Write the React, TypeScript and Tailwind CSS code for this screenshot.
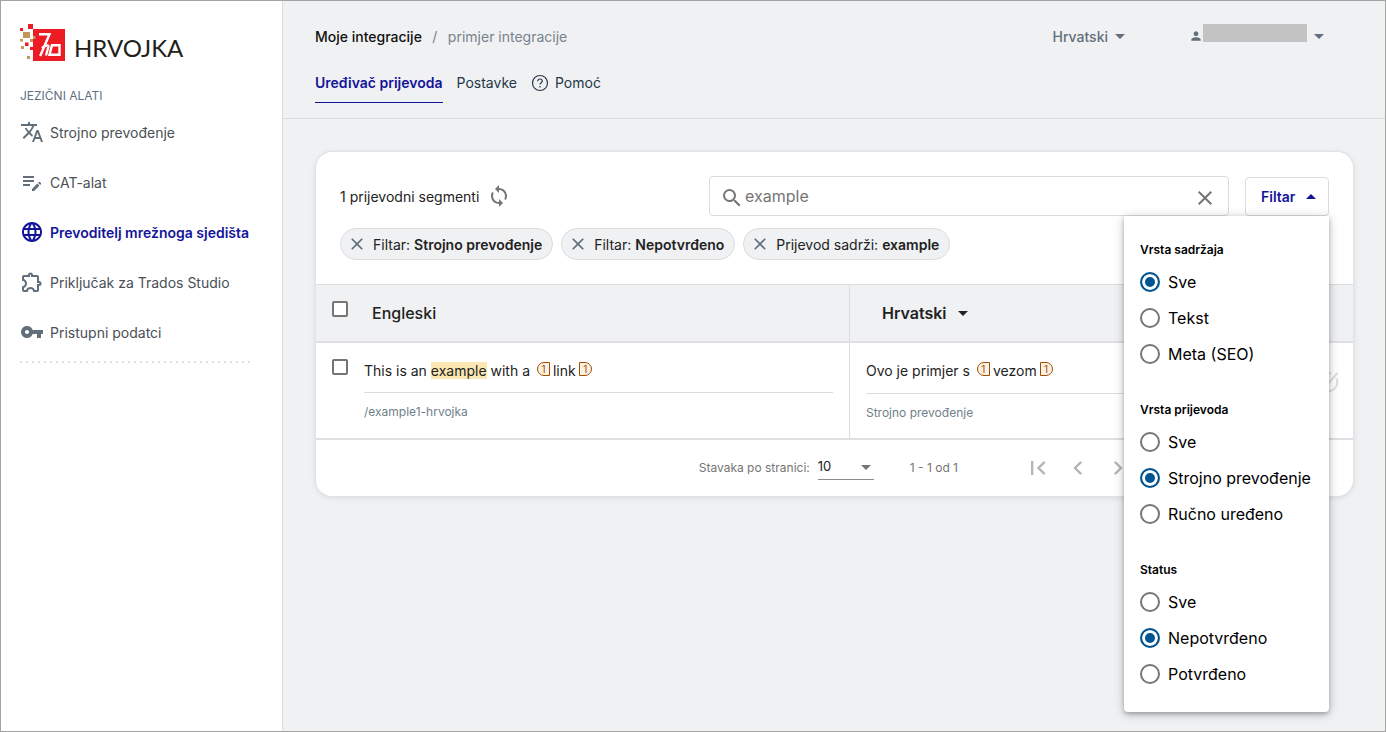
import { useState } from "react";
import type { ReactNode } from "react";
import {
  MdArrowDropDown,
  MdArrowDropUp,
  MdChevronLeft,
  MdChevronRight,
  MdClose,
  MdEditNote,
  MdFirstPage,
  MdLanguage,
  MdLastPage,
  MdOutlineExtension,
  MdPerson,
  MdSearch,
  MdSync,
  MdTranslate,
  MdVpnKey,
} from "react-icons/md";

const navItems = [
  { label: "Strojno prevođenje", icon: MdTranslate },
  { label: "CAT-alat", icon: MdEditNote },
  { label: "Prevoditelj mrežnoga sjedišta", icon: MdLanguage, active: true },
  { label: "Priključak za Trados Studio", icon: MdOutlineExtension },
  { label: "Pristupni podatci", icon: MdVpnKey },
];

const chips = [
  { name: "Filtar:", value: "Strojno prevođenje" },
  { name: "Filtar:", value: "Nepotvrđeno" },
  { name: "Prijevod sadrži:", value: "example" },
];

const filterGroups = [
  { id: "content", title: "Vrsta sadržaja", options: ["Sve", "Tekst", "Meta (SEO)"] },
  { id: "type", title: "Vrsta prijevoda", options: ["Sve", "Strojno prevođenje", "Ručno uređeno"] },
  { id: "status", title: "Status", options: ["Sve", "Nepotvrđeno", "Potvrđeno"] },
];

function Logo() {
  return (
    <a href="#" className="flex items-start gap-2 text-[#231f20]">
      <svg width="46" height="38" viewBox="0 0 46 38" aria-hidden="true">
        <g fill="#ed1c24">
          <path d="M13 5h32v32H13z" />
          <path d="M8 0h5v5H8zM0 4h3v3H0zM5 18.500h3.500v3.500H5zM10 23h3v3h-3z" />
        </g>
        <g fill="#c4965a">
          <path d="M3 8h7v6H3zM10 15h3v3h-3zM0 15h3v2.500H0zM1 22h3v3H1zM7 32h3v3H7zM13 12h2.500v3H13z" />
        </g>
        <g fill="none" stroke="#fff" strokeWidth="2.400">
          <path d="M19 10.200h10.500L20.200 32" />
          <path d="M22 24c3-2.500 7-3.500 6.500-1.500L26 31.500" />
          <path d="M29.500 30.800l2.500-9.500h7.500v9.500z" />
        </g>
      </svg>
      <span className="pt-2 font-['Lato',sans-serif] text-[24px] leading-8">HRVOJKA</span>
    </a>
  );
}

function Sidebar() {
  return (
    <aside className="w-[282px] shrink-0 border-r border-[#dadce0] bg-white pt-[23px] pl-[19px]">
      <Logo />
      <h2 className="mt-5 text-[12px] leading-6 text-[#5f6f7f]">JEZIČNI ALATI</h2>
      <nav className="mt-3 flex flex-col gap-[26px]">
        {navItems.map(({ label, icon: Icon, active }) => (
          <a
            key={label}
            href="#"
            className={
              active
                ? "flex h-6 items-center gap-1.5 text-[14px] font-semibold text-[#14149b]"
                : "flex h-6 items-center gap-1.5 text-[14px] text-[#4a5056]"
            }
          >
            <Icon size={24} className={active ? "text-[#14149b]" : "text-[#636e7b]"} />
            {label}
          </a>
        ))}
      </nav>
      <div className="mt-[17px] mr-8 h-0.5 bg-[repeating-linear-gradient(90deg,#dfdfdf_0_2px,transparent_2px_6px)]" />
    </aside>
  );
}

function HelpIcon() {
  return (
    <svg width="18" height="18" viewBox="0 0 18 18" fill="none" stroke="currentColor" strokeWidth="1.200">
      <circle cx="9" cy="9" r="7.500" />
      <path d="M6.700 7.200C6.700 5.800 7.700 5 9 5s2.300.8 2.300 2c0 1.700-2.300 1.800-2.300 3.600" />
      <path d="M9 12v1.400" />
    </svg>
  );
}

function TopBar() {
  return (
    <header className="border-b border-[#dadce0] pr-[54px] pl-8">
      <div className="flex h-[70px] items-center justify-between text-[14px]">
        <nav className="flex items-center">
          <a href="#" className="font-medium text-[#111]">
            Moje integracije
          </a>
          <span className="w-[26px] text-center text-[#78828c]">/</span>
          <span className="text-[#78828c]">primjer integracije</span>
        </nav>
        <div className="flex items-center text-[#636e7b]">
          <button type="button" className="flex items-center font-medium">
            Hrvatski
            <MdArrowDropDown size={24} />
          </button>
          <button type="button" aria-label="Račun" className="ml-[57px] flex items-center">
            <MdPerson size={14} />
            <span className="-mt-1.5 h-[18px] w-[104px] bg-[#c3c3c3]" />
            <MdArrowDropDown size={24} />
          </button>
        </div>
      </div>
      <nav className="mt-0.5 flex h-[45px] gap-3.5 text-[14px] leading-5 text-[#253746]">
        <a href="#" className="h-[30px] border-b border-b-[#14149b] font-semibold text-[#14149b]">
          Uređivač prijevoda
        </a>
        <a href="#">Postavke</a>
        <a href="#" className="flex h-5 items-center gap-1.5">
          <HelpIcon />
          Pomoć
        </a>
      </nav>
    </header>
  );
}

function FilterMenu() {
  const [selected, setSelected] = useState<Record<string, string>>({
    content: "Sve",
    type: "Strojno prevođenje",
    status: "Nepotvrđeno",
  });

  return (
    <div className="absolute top-full right-0 z-10 flex w-[205px] flex-col gap-7 rounded-b bg-white px-4 pt-6 pb-5 text-black shadow-[0_2px_4px_rgba(0,0,0,0.25),0_2px_12px_rgba(0,0,0,0.2)]">
      {filterGroups.map((group) => (
        <fieldset key={group.id}>
          <legend className="mb-1 text-[12px] leading-5 font-semibold">{group.title}</legend>
          {group.options.map((option) => (
            <label key={option} className="flex h-9 items-center gap-2 text-[16px] whitespace-nowrap">
              <input
                type="radio"
                name={group.id}
                checked={selected[group.id] === option}
                onChange={() => setSelected({ ...selected, [group.id]: option })}
                className="size-5 shrink-0 appearance-none rounded-full border-2 border-[#757575] bg-white checked:border-[#005493] checked:bg-[#005493] checked:shadow-[inset_0_0_0_3px_#fff]"
              />
              {option}
            </label>
          ))}
        </fieldset>
      ))}
    </div>
  );
}

function Toolbar() {
  const [query, setQuery] = useState("example");
  const [open, setOpen] = useState(true);

  return (
    <div className="px-6 pt-6 pb-6">
      <div className="flex items-end">
        <p className="flex flex-1 items-center gap-2 self-center text-[14px] text-[#222]">
          1 prijevodni segmenti
          <button type="button" aria-label="Osvježi" className="text-[#757575]">
            <MdSync size={24} />
          </button>
        </p>
        <div className="flex h-10 w-[520px] items-center rounded border border-[#dadce0] pr-[11px] pl-2.5 text-[#757575]">
          <MdSearch size={24} className="mt-1 shrink-0" />
          <input
            type="text"
            aria-label="Pretraži"
            value={query}
            onChange={(e) => setQuery(e.target.value)}
            className="min-w-0 flex-1 pl-px text-[16px] outline-none"
          />
          <button type="button" aria-label="Očisti" onClick={() => setQuery("")} className="mt-1">
            <MdClose size={24} />
          </button>
        </div>
        <div className="relative ml-4">
          <button
            type="button"
            onClick={() => setOpen(!open)}
            className="flex h-[39px] w-[84px] items-center justify-between rounded border border-[#dadce0] pr-[5px] pl-[15px] text-[14px] font-semibold text-[#14149b]"
          >
            Filtar
            <MdArrowDropUp size={24} />
          </button>
          {open && <FilterMenu />}
        </div>
      </div>
      <div className="mt-3 flex gap-2">
        {chips.map((chip) => (
          <span
            key={chip.value}
            className="flex h-8 items-center rounded-full border border-[#dadce0] bg-[#f0f1f3] pr-2.5 pl-1.5 text-[14px] text-[#222]"
          >
            <button type="button" aria-label="Ukloni filtar" className="mr-1.5 text-[#5f6f7f]">
              <MdClose size={20} />
            </button>
            {chip.name} <b className="ml-1 font-semibold">{chip.value}</b>
          </span>
        ))}
      </div>
    </div>
  );
}

function Tag({ closing = false, children }: { closing?: boolean; children: ReactNode }) {
  return (
    <span
      className={
        closing
          ? "mx-[3px] inline-block h-3.5 w-[13px] rounded-r-[7px] border border-[#a04d00] bg-[#fdf1e4] text-center align-[3px] text-[10px] leading-3 text-[#a04d00]"
          : "mx-[3px] inline-block h-3.5 w-[13px] rounded-l-[7px] border border-[#a04d00] bg-[#fdf1e4] text-center align-[3px] text-[10px] leading-3 text-[#a04d00]"
      }
    >
      {children}
    </span>
  );
}

function Checkbox({ label }: { label: string }) {
  return (
    <input
      type="checkbox"
      aria-label={label}
      className="block size-4 appearance-none rounded-xs border-2 border-[#757575] bg-white checked:bg-[#005493]"
    />
  );
}

function SegmentTable() {
  return (
    <table className="w-full table-fixed border-collapse text-left text-[14px] text-[#222]">
      <colgroup>
        <col className="w-12" />
        <col />
        <col className="w-[42%]" />
        <col className="w-[68px]" />
      </colgroup>
      <thead>
        <tr className="h-[57px] border-t border-b-2 border-t-[#dadce0] border-b-[#dfdfe4] bg-[#f0f1f3] text-[16px]">
          <th className="pt-4 pl-4 align-top">
            <Checkbox label="Odaberi sve" />
          </th>
          <th className="border-r border-[#dadce0] pl-2 font-medium">Engleski</th>
          <th className="pl-8 font-semibold">
            <span className="flex items-center gap-1">
              Hrvatski
              <MdArrowDropDown size={24} />
            </span>
          </th>
          <th />
        </tr>
      </thead>
      <tbody>
        <tr className="h-[97px] border-b-2 border-[#dfdfe4]">
          <td className="pt-4 pl-4 align-top">
            <Checkbox label="Odaberi segment" />
          </td>
          <td className="border-r border-[#dadce0] pr-4 align-top">
            <p className="h-[50px] border-b border-[#dadce0] pt-[17px] leading-[21px]">
              This is an <mark className="bg-[#fbe7b2] text-[#222]">example</mark> with a{" "}
              <Tag>1</Tag>link<Tag closing>1</Tag>
            </p>
            <p className="pt-2.5 text-[12px] leading-[18px] text-[#6f7f8a]">/example1-hrvojka</p>
          </td>
          <td className="pl-4 align-top">
            <p className="h-[51px] border-b border-[#dadce0] pt-[17px] leading-[21px]">
              Ovo je primjer s <Tag>1</Tag>vezom<Tag closing>1</Tag>
            </p>
            <p className="pt-2.5 text-[12px] leading-[18px] text-[#6f7f8a]">Strojno prevođenje</p>
          </td>
          <td className="pt-7 pr-3.5 align-top">
            <button type="button" aria-label="Potvrdi" className="ml-auto block text-[#dcdde0]">
              <svg width="22" height="22" viewBox="0 0 22 22" fill="none" stroke="currentColor" strokeWidth="2">
                <path d="M14 2.500a9 9 0 1 0 5.500 5" />
                <path d="M6 10l4 4 10.500-12" />
              </svg>
            </button>
          </td>
        </tr>
      </tbody>
    </table>
  );
}

function Paginator() {
  return (
    <div className="flex h-14 items-center justify-end pr-[175px] text-[12px] text-[#757575]">
      <label htmlFor="page-size">Stavaka po stranici:</label>
      <div className="relative ml-2 flex items-center border-b border-[#8c8c8c]">
        <select id="page-size" className="h-6 w-14 appearance-none text-[13px] text-[#222]">
          <option>10</option>
          <option>25</option>
          <option>50</option>
        </select>
        <MdArrowDropDown size={24} className="pointer-events-none absolute -right-1" />
      </div>
      <span className="mr-[60px] ml-9">1 - 1 od 1</span>
      <div className="flex text-[#b5b5b5]">
        {[MdFirstPage, MdChevronLeft, MdChevronRight, MdLastPage].map((Icon, i) => (
          <button key={i} type="button" disabled className="flex size-10 items-center justify-center">
            <Icon size={28} />
          </button>
        ))}
      </div>
    </div>
  );
}

function App() {
  return (
    <div className="flex min-h-screen border border-[#a3a3a3] bg-[#f0f1f3] font-['Inter','Noto_Sans',sans-serif]">
      <Sidebar />
      <div className="min-w-0 flex-1">
        <TopBar />
        <main className="pt-[33px] pr-8 pb-8 pl-[33px]">
          <section className="rounded-2xl bg-white shadow-[0_0_0_1px_#e2e3e6,0_1px_6px_rgba(0,0,0,0.12)]">
            <Toolbar />
            <SegmentTable />
            <Paginator />
          </section>
        </main>
      </div>
    </div>
  );
}

export default App;
